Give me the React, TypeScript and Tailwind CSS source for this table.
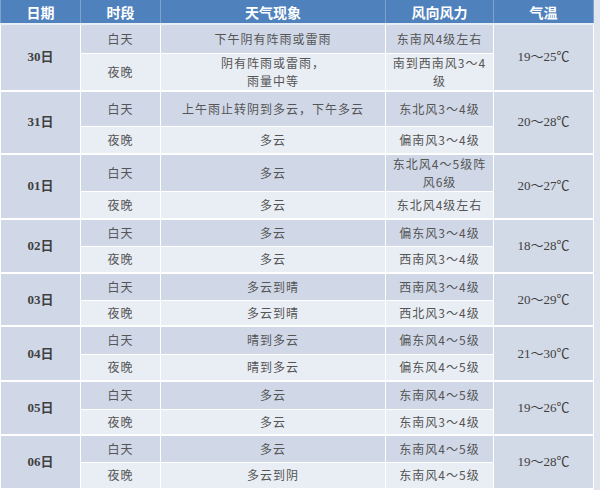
import React from "react";

type Half = { weather: React.ReactNode; wind: React.ReactNode; h: string };
type Day = { date: string; temp: string; day: Half; night: Half };

const days: Day[] = [
  {
    date: "30日",
    temp: "19～25℃",
    day: { weather: "下午阴有阵雨或雷雨", wind: "东南风4级左右", h: "h-[29px]" },
    night: {
      weather: (<>阴有阵雨或雷雨，<br />雨量中等</>),
      wind: (<>南到西南风3～4<br />级</>),
      h: "h-[35px]",
    },
  },
  {
    date: "31日",
    temp: "20～28℃",
    day: { weather: "上午雨止转阴到多云，下午多云", wind: "东北风3～4级", h: "h-[36px]" },
    night: { weather: "多云", wind: "偏南风3～4级", h: "h-[27px]" },
  },
  {
    date: "01日",
    temp: "20～27℃",
    day: { weather: "多云", wind: (<>东北风4～5级阵<br />风6级</>), h: "h-[35px]" },
    night: { weather: "多云", wind: "东北风4级左右", h: "h-[28px]" },
  },
  {
    date: "02日",
    temp: "18～28℃",
    day: { weather: "多云", wind: "偏东风3～4级", h: "h-[27px]" },
    night: { weather: "多云", wind: "西南风3～4级", h: "h-[27px]" },
  },
  {
    date: "03日",
    temp: "20～29℃",
    day: { weather: "多云到晴", wind: "西南风3～4级", h: "h-[27px]" },
    night: { weather: "多云到晴", wind: "西北风3～4级", h: "h-[26px]" },
  },
  {
    date: "04日",
    temp: "21～30℃",
    day: { weather: "晴到多云", wind: "偏东风4～5级", h: "h-[28px]" },
    night: { weather: "晴到多云", wind: "偏东风4～5级", h: "h-[27px]" },
  },
  {
    date: "05日",
    temp: "19～26℃",
    day: { weather: "多云", wind: "东南风4～5级", h: "h-[28px]" },
    night: { weather: "多云", wind: "东南风3～4级", h: "h-[26px]" },
  },
  {
    date: "06日",
    temp: "19～28℃",
    day: { weather: "多云", wind: "东南风4～5级", h: "h-[27px]" },
    night: { weather: "多云到阴", wind: "东南风4～5级", h: "h-[27px]" },
  },
];

const cjk = "font-['Noto_Sans_CJK_SC',sans-serif]";
const cell = "border border-white text-center align-middle px-1 leading-[18px]";

export default function App() {
  return (
    <div className="w-[600px] h-[490px] overflow-hidden bg-[#dfe4ee]">
      <table className={`w-[593px] border-collapse table-fixed text-[12px] tracking-[1px] text-[#555] ${cjk}`}>
        <colgroup>
          <col className="w-[80px]" />
          <col className="w-[80px]" />
          <col className="w-[225px]" />
          <col className="w-[108px]" />
          <col className="w-[100px]" />
        </colgroup>
        <thead>
          <tr className="h-[24px] bg-[#4f81bd] text-white text-[14px] font-bold tracking-normal">
            {["日期", "时段", "天气现象", "风向风力", "气温"].map((t) => (
              <th key={t} className="border-x border-[#7fa3d0] border-b-[2px] border-b-[#e8eef6] text-center leading-[20px]">
                {t}
              </th>
            ))}
          </tr>
        </thead>
        <tbody>
          {days.map((d) => (
            <React.Fragment key={d.date}>
              <tr className={`${d.day.h} bg-[#d0d8e8]`}>
                <td
                  rowSpan={2}
                  className={`${cell} border-b-2 bg-[#d0d8e8] font-bold text-[#404040] tracking-normal font-['Liberation_Serif','Noto_Sans_CJK_SC',serif] text-[13px]`}
                >
                  {d.date}
                </td>
                <td className={cell}>白天</td>
                <td className={cell}>{d.day.weather}</td>
                <td className={cell}>{d.day.wind}</td>
                <td
                  rowSpan={2}
                  className={`${cell} border-b-2 bg-[#d3dae7] text-[#404040] tracking-normal font-['Liberation_Serif','Noto_Sans_CJK_SC',serif] text-[13px]`}
                >
                  {d.temp}
                </td>
              </tr>
              <tr className={`${d.night.h} bg-[#e9edf4]`}>
                <td className={`${cell} border-b-2`}>夜晚</td>
                <td className={`${cell} border-b-2`}>{d.night.weather}</td>
                <td className={`${cell} border-b-2`}>{d.night.wind}</td>
              </tr>
            </React.Fragment>
          ))}
        </tbody>
      </table>
    </div>
  );
}
